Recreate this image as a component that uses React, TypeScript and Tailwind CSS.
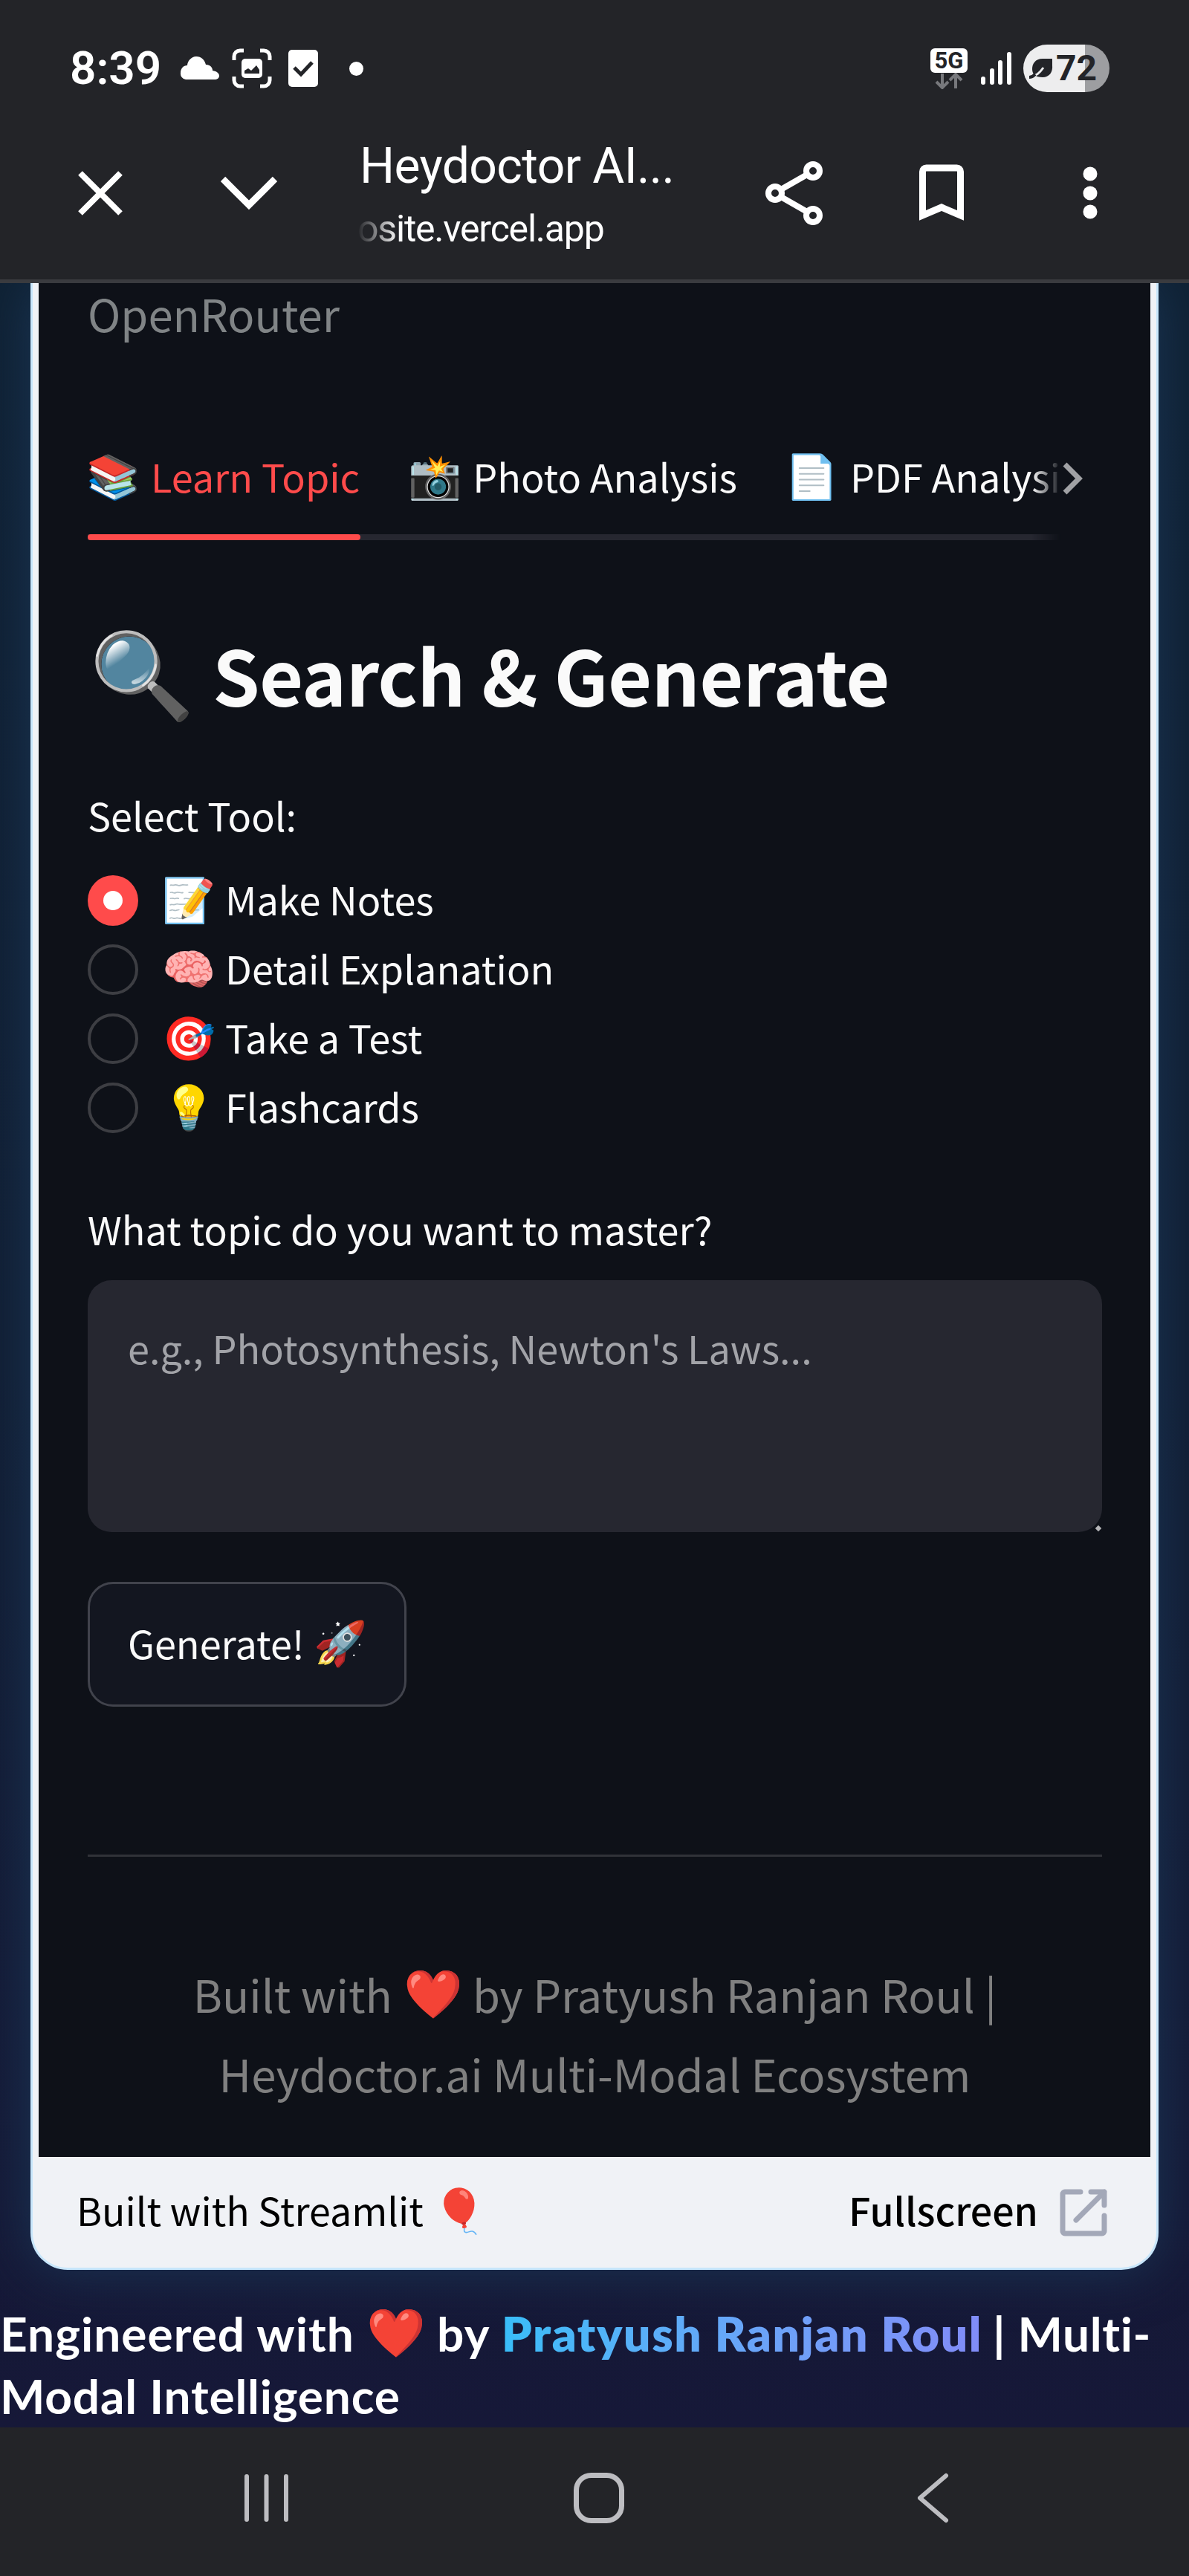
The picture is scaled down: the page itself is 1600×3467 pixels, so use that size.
import { useState, type ReactNode } from 'react';

const TABS = [
    { icon: '📚', label: 'Learn Topic' },
    { icon: '📸', label: 'Photo Analysis' },
    { icon: '📄', label: 'PDF Analysis' },
];

const TOOLS = [
    { icon: '📝', label: 'Make Notes' },
    { icon: '🧠', label: 'Detail Explanation' },
    { icon: '🎯', label: 'Take a Test' },
    { icon: '💡', label: 'Flashcards' },
];

function Emoji({ children }: { children: ReactNode }) {
    return (
        <span className="flex w-[68px] shrink-0 justify-center pt-[5px] font-['Noto_Color_Emoji',sans-serif] text-[58px] leading-[80px]">
            {children}
        </span>
    );
}

function StatusBar() {
    return (
        <div className="flex h-[184px] items-center pl-[94px] pr-[107px] text-white">
            <span className="w-[122px] font-['Roboto',sans-serif] text-[62px] font-semibold leading-[80px]">8:39</span>
            {/* Notification icons */}
            <svg className="ml-[26px]" width="53" height="32" viewBox="0 0 53 32" fill="currentColor">
                <path d="M8 31a8 8 0 0 1-7-9c0-6 4-10 9-10A13 13 0 0 1 22 0c7 0 11 4 13 11c6 0 9 4 9 8c6 1 9 4 9 7a5 5 0 0 1-5 5z" />
            </svg>
            <svg className="ml-[17px]" width="54" height="54" viewBox="0 0 54 54" fill="none" stroke="currentColor" strokeWidth="5">
                <path d="M3 16v-5a8 8 0 0 1 8-8h5M38 3h5a8 8 0 0 1 8 8v5M51 38v5a8 8 0 0 1-8 8h-5M16 51h-5a8 8 0 0 1-8-8v-5" />
                <rect x="13" y="14" width="28" height="26" rx="5" fill="currentColor" stroke="none" />
                <path d="M17 34v-4l5-3 4 3 7-7 4 6v5z" fill="#232428" stroke="none" />
            </svg>
            <svg className="ml-[22px]" width="40" height="50" viewBox="0 0 40 50">
                <rect width="40" height="50" rx="5" fill="currentColor" />
                <path d="M8 24l9 9 15-16" fill="none" stroke="#232428" strokeWidth="5" />
            </svg>
            <span className="ml-[42px] size-[19px] rounded-full bg-white" />

            <div className="ml-auto flex items-center">
                <div className="flex flex-col items-center">
                    <span className="flex h-[33px] w-[50px] items-center justify-center rounded-md bg-white font-['Roboto',sans-serif] text-[31px] font-bold leading-none text-[#232428]">
                        5G
                    </span>
                    <svg width="38" height="22" viewBox="0 0 38 22" fill="none" stroke="#77787c" strokeWidth="4">
                        <path d="M10 1v18M2 12l8 8 8-8M28 21V3M20 10l8-8 8 8" />
                    </svg>
                </div>
                <svg className="ml-[18px]" width="42" height="44" viewBox="0 0 42 44" fill="currentColor">
                    <rect y="33" width="6" height="11" rx="3" />
                    <rect x="12" y="22" width="6" height="22" rx="3" />
                    <rect x="23" y="11" width="6" height="33" rx="3" />
                    <rect x="35" width="6" height="44" rx="3" />
                </svg>
                <div className="ml-[15px] flex h-[64px] w-[116px] items-center rounded-full bg-[linear-gradient(90deg,#ededee_71.5%,#9d9ea1_71.5%)] pl-[8px] text-[#232428]">
                    <svg width="32" height="28" viewBox="0 0 32 28">
                        <path d="M31 1H18C8 1 4 8 4 15c0 3 1 5 2 7 3 3 8 4 12 4 9 0 14-7 13-16z" fill="currentColor" />
                        <path d="M1 26c9-2 13-6 18-13" fill="none" stroke="#ededee" strokeWidth="3" />
                        <path d="M0 26c4 0 6-2 8-4" fill="none" stroke="currentColor" strokeWidth="4" />
                    </svg>
                    <span className="ml-[4px] font-['Roboto',sans-serif] text-[48px] font-bold leading-none">72</span>
                </div>
            </div>
        </div>
    );
}

function BrowserBar() {
    return (
        <div className="flex h-[192px] items-start pl-[105px] text-white">
            <svg className="mt-[46px]" width="60" height="60" viewBox="0 0 60 60" fill="none" stroke="currentColor" strokeWidth="8">
                <path d="M3 3l54 54M57 3L3 57" />
            </svg>
            <svg className="ml-[132px] mt-[53px]" width="76" height="46" viewBox="0 0 76 46" fill="none" stroke="currentColor" strokeWidth="9">
                <path d="M3 4l35 35L73 4" />
            </svg>
            <div className="ml-[108px] flex w-[500px] flex-col font-['Roboto',sans-serif]">
                <span className="whitespace-nowrap pl-[3px] text-[66px] leading-[80px] tracking-[-0.6px]">Heydoctor AI...</span>
                <span className="mt-[4px] whitespace-nowrap text-[50px] leading-[80px] tracking-[-1.2px] mask-[linear-gradient(90deg,transparent,#000_56px)]">
                    osite.vercel.app
                </span>
            </div>
            <svg className="ml-[49px] mt-[33px]" width="77" height="86" viewBox="0 0 77 86" fill="none" stroke="currentColor" strokeWidth="8">
                <circle cx="64" cy="13" r="9" />
                <circle cx="13" cy="43" r="9" />
                <circle cx="64" cy="73" r="9" />
                <path d="M21 38l35-20M21 48l35 20" />
            </svg>
            <svg className="ml-[130px] mt-[37px]" width="60" height="76" viewBox="0 0 60 76" fill="none" stroke="currentColor" strokeWidth="9">
                <path d="M4.500 69V10a5 5 0 0 1 5-5h41a5 5 0 0 1 5 5v59L30 58z" />
            </svg>
            <svg className="ml-[160px] mt-[40px]" width="20" height="72" viewBox="0 0 20 72" fill="currentColor">
                <circle cx="10" cy="10" r="9.500" />
                <circle cx="10" cy="36" r="9.500" />
                <circle cx="10" cy="61" r="9.500" />
            </svg>
        </div>
    );
}

function TabList() {
    return (
        <div className="relative mt-[138px] flex h-[128px] w-[1365px]">
            <div className="flex w-[1310px] gap-[67px] overflow-hidden border-b-8 border-[#262730] mask-[linear-gradient(90deg,#000_97%,transparent)]">
                {TABS.map((tab) => (
                    <div key={tab.label} className="flex h-[81px] shrink-0 items-center gap-[17px] whitespace-nowrap leading-[80px] first:text-[#ff4b4b]">
                        <Emoji>{tab.icon}</Emoji>
                        {tab.label}
                    </div>
                ))}
            </div>
            <span className="absolute bottom-0 left-0 h-[8px] w-[367px] rounded-full bg-[#ff4b4b]" />
            <svg className="ml-[2px] mt-[23px]" width="28" height="44" viewBox="0 0 28 44" fill="none" stroke="#a0a1a4" strokeWidth="7">
                <path d="M3 3l19 19L3 41" />
            </svg>
        </div>
    );
}

function ToolPicker() {
    const [selected, setSelected] = useState('Make Notes');

    return (
        <div className="mt-[39px] flex flex-col">
            {TOOLS.map((tool) => (
                <button key={tool.label} onClick={() => setSelected(tool.label)} className="flex h-[93px] items-center">
                    {tool.label === selected ? (
                        <span className="flex size-[68px] items-center justify-center rounded-full bg-[#ff4b4b]">
                            <span className="size-[26px] rounded-full bg-white" />
                        </span>
                    ) : (
                        <span className="size-[68px] rounded-full border-4 border-[#3d3e43]" />
                    )}
                    <span className="-mt-[5px] ml-[34px] flex items-center gap-[15px] leading-[80px]">
                        <Emoji>{tool.icon}</Emoji>
                        {tool.label}
                    </span>
                </button>
            ))}
        </div>
    );
}

function AppFrame() {
    return (
        <div className="mx-[41px] flex h-[2674px] flex-col rounded-b-[50px] border-x-3 border-b-3 border-[#c8e6fb] bg-[#f0f2f6] shadow-[0_0_70px_#1b3656]">
            <div className="mx-[8px] flex h-[2522px] flex-col bg-[#0e1118] pl-[66px] text-[52.200px] text-[#fafafa]">
                <p className="text-[59.800px] leading-[80px] text-[#808486]">OpenRouter</p>
                <TabList />
                <h2 className="mt-[110px] flex h-[140px] items-center whitespace-nowrap text-[102px] font-bold leading-[140px] tracking-[-0.7px]">
                    <span className="flex w-[146px] justify-center pt-[5px] font-['Noto_Color_Emoji',sans-serif] text-[114px]">🔍</span>
                    <span className="ml-[22px]">Search &amp; Generate</span>
                </h2>
                <p className="mt-[89px] leading-[60px]">Select Tool:</p>
                <ToolPicker />
                <p className="mt-[86px] leading-[60px]">What topic do you want to master?</p>
                <div className="relative mt-[40px] h-[339px] w-[1365px] rounded-[32px] bg-[#262730] px-[54px] pt-[50px] leading-[80px] text-[#a2a3a8]">
                    e.g., Photosynthesis, Newton's Laws...
                    <span className="absolute bottom-[2px] right-[2px] size-[6px] rotate-45 bg-[#b5b5b8]" />
                </div>
                <button className="mt-[67px] flex h-[168px] w-[429px] items-center gap-[15px] rounded-[34px] border-3 border-[#41434c] bg-[#131620] pb-[7px] pl-[51px] leading-[80px]">
                    Generate!
                    <Emoji>🚀</Emoji>
                </button>
                <hr className="mt-[199px] w-[1365px] border-t-3 border-[#303238]" />
                <div className="mt-[131px] w-[1365px] text-[59.800px] leading-[107px] text-[#808080]">
                    <p className="flex items-center justify-center gap-[15px]">
                        Built with
                        <span className="w-[78px] pt-[3px] text-center font-['Noto_Color_Emoji',sans-serif] text-[64px] leading-[104px]">❤️</span>
                        by Pratyush Ranjan Roul |
                    </p>
                    <p className="text-center">Heydoctor.ai Multi-Modal Ecosystem</p>
                </div>
            </div>
            <div className="flex h-[149px] items-center pl-[59px] pr-[66px] text-[51.900px] text-black">
                <span className="-mt-[8px] leading-[80px]">Built with Streamlit</span>
                <span className="-mt-[8px] ml-[15px]"><Emoji>🎈</Emoji></span>
                <span className="-mt-[8px] ml-auto font-medium leading-[80px]">Fullscreen</span>
                <svg className="ml-[29px]" width="64" height="64" viewBox="0 0 64 64" fill="none" stroke="#a3a8b8" strokeWidth="7" strokeLinecap="round" strokeLinejoin="round">
                    <path d="M28 4H7a3 3 0 0 0-3 3v50a3 3 0 0 0 3 3h50a3 3 0 0 0 3-3V36M42 4h18v18M60 4L22 42" />
                </svg>
            </div>
        </div>
    );
}

function Credit() {
    return (
        <div className="mt-[44px] flex flex-col font-['Lato',sans-serif] text-[64px] font-bold leading-[84px] text-white">
            <p className="flex items-center whitespace-nowrap">
                <span className="tracking-[1px]">Engineered with</span>
                <span className="ml-[16px] w-[78px] text-center font-['Noto_Color_Emoji',sans-serif] text-[64px]">❤️</span>
                <span className="ml-[17px] tracking-[1.5px]">by</span>
                <span className="ml-[15px] bg-linear-to-r from-[#38bdf8] to-[#818cf8] bg-clip-text font-extrabold tracking-[1.6px] text-transparent">Pratyush Ranjan Roul</span>
                <span className="ml-[14px] tracking-[0.6px]">| Multi-</span>
            </p>
            <p className="tracking-[0.8px]">Modal Intelligence</p>
        </div>
    );
}

function NavBar() {
    return (
        <div className="relative flex h-[200px] items-start bg-[#232428] pl-[328px] pt-[61px]">
            <svg width="61" height="68" viewBox="0 0 61 68" stroke="#bdbdc1" strokeWidth="6" strokeLinecap="round">
                <path d="M4 5v58M30.500 5v58M57 5v58" />
            </svg>
            <svg className="ml-[383px]" width="68" height="68" viewBox="0 0 68 68" fill="none" stroke="#bdbdc1" strokeWidth="7">
                <rect x="3.500" y="3.500" width="61" height="61" rx="20" />
            </svg>
            <svg className="ml-[393px]" width="44" height="68" viewBox="0 0 44 68" fill="none" stroke="#bdbdc1" strokeWidth="6" strokeLinecap="round" strokeLinejoin="round">
                <path d="M40 4L5 34l35 30" />
            </svg>
        </div>
    );
}

export default function App() {
    return (
        <div className="flex h-[3467px] w-[1600px] flex-col overflow-hidden bg-[#232428] font-['Noto_Sans_CJK_SC',sans-serif]">
            <header className="relative z-10 shrink-0 border-b-5 border-[#3a3b3f] bg-[#232428]">
                <StatusBar />
                <BrowserBar />
            </header>
            <main className="flex h-[2886px] shrink-0 flex-col bg-linear-to-b from-[#0f2133] via-[#111e33] to-[#161838]">
                <AppFrame />
                <Credit />
            </main>
            <NavBar />
        </div>
    );
}
